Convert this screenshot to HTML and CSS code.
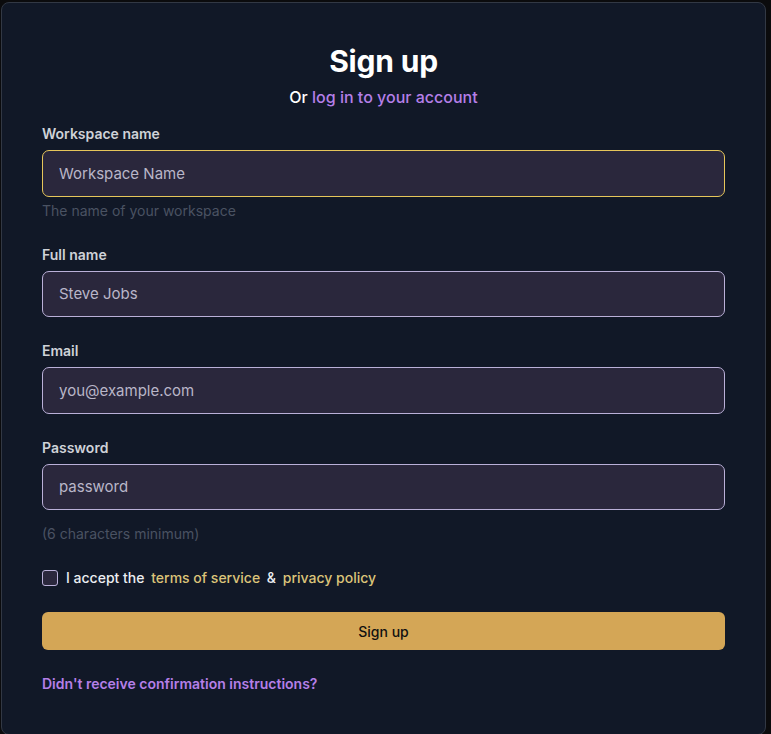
FILE: index.html
```html
<!DOCTYPE html>
<html lang="en">
<head>
<meta charset="utf-8">
<title>Sign up</title>
<link rel="stylesheet" href="styles.css">
</head>
<body>
<div class="card">
  <h1 class="title">Sign up</h1>
  <p class="subtitle">Or <a href="#" class="link-purple">log in to your account</a></p>
  <form class="form">
    <div class="field">
      <label class="label" for="ws">Workspace name</label>
      <input class="input input-focus" id="ws" type="text" placeholder="Workspace Name">
      <p class="help help-tight">The name of your workspace</p>
    </div>
    <div class="field">
      <label class="label" for="fn">Full name</label>
      <input class="input" id="fn" type="text" placeholder="Steve Jobs">
    </div>
    <div class="field">
      <label class="label" for="em">Email</label>
      <input class="input" id="em" type="email" placeholder="you@example.com">
    </div>
    <div class="field">
      <label class="label" for="pw">Password</label>
      <input class="input" id="pw" type="password" placeholder="password">
      <p class="help help-loose">(6 characters minimum)</p>
    </div>
    <div class="accept">
      <span class="checkbox"></span>
      <span class="accept-text">I accept the <a href="#" class="link-gold">terms of service</a> &amp; <a href="#" class="link-gold">privacy policy</a></span>
    </div>
    <button type="button" class="button">Sign up</button>
    <a href="#" class="resend">Didn't receive confirmation instructions?</a>
  </form>
</div>
</body>
</html>
```

FILE: styles.css
```css
* { box-sizing: border-box; }
html, body {
  margin: 0;
  padding: 0;
  background: #0b0b0d;
  font-family: Inter, "Noto Sans", sans-serif;
}
.card {
  margin: 2px 0 0 1px;
  width: 765px;
  background: #111827;
  border: 1px solid #323844;
  border-radius: 8px;
  padding: 40px 40px 40px 40px;
}
.title {
  margin: 0;
  text-align: center;
  color: #ffffff;
  font-size: 30px;
  line-height: 36px;
  font-weight: 700;
  letter-spacing: -0.2px;
}
.subtitle {
  margin: 6px 0 0;
  text-align: center;
  color: #ffffff;
  font-size: 16px;
  line-height: 24px;
  font-weight: 500;
}
.link-purple {
  color: #b57fe8;
  text-decoration: none;
}
.form {
  display: flex;
  flex-direction: column;
  gap: 24px;
  margin-top: 15px;
}
.field {
  display: flex;
  flex-direction: column;
}
.label {
  color: #cfd2d8;
  font-size: 14px;
  line-height: 20px;
  font-weight: 600;
  margin-bottom: 6px;
}
.input {
  height: 46.5px;
  width: 100%;
  background: #2a273c;
  border: 1px solid #bab0d8;
  border-radius: 7px;
  padding: 0 16px;
  font-family: Inter, "Noto Sans", sans-serif;
  font-size: 15px;
  color: #e5e7eb;
  outline: none;
}
.input::placeholder { color: #b9b6c8; opacity: 1; }
.input-focus { border-color: #e6c65a; }
.help {
  margin: 0;
  color: #4a5262;
  font-size: 14px;
  line-height: 20px;
}
.help-tight { margin-top: 4px; }
.help-loose { margin-top: 14px; }
.accept {
  display: flex;
  align-items: center;
  gap: 8px;
  height: 20px;
}
.checkbox {
  width: 16px;
  height: 16px;
  border: 1px solid #bab0d8;
  background: #2a273c;
  border-radius: 3px;
  flex: none;
}
.accept-text {
  color: #eceef2;
  font-size: 14px;
  line-height: 20px;
  font-weight: 500;
}
.link-gold {
  color: #dcc479;
  text-decoration: none;
  margin: 0 3px;
}
.button {
  height: 38px;
  width: 100%;
  border: none;
  border-radius: 6px;
  background: #d4a656;
  color: #111111;
  font-family: Inter, "Noto Sans", sans-serif;
  font-size: 14px;
  font-weight: 500;
  cursor: pointer;
}
.resend {
  color: #b57fe8;
  font-size: 14px;
  line-height: 20px;
  font-weight: 600;
  text-decoration: none;
}
```
